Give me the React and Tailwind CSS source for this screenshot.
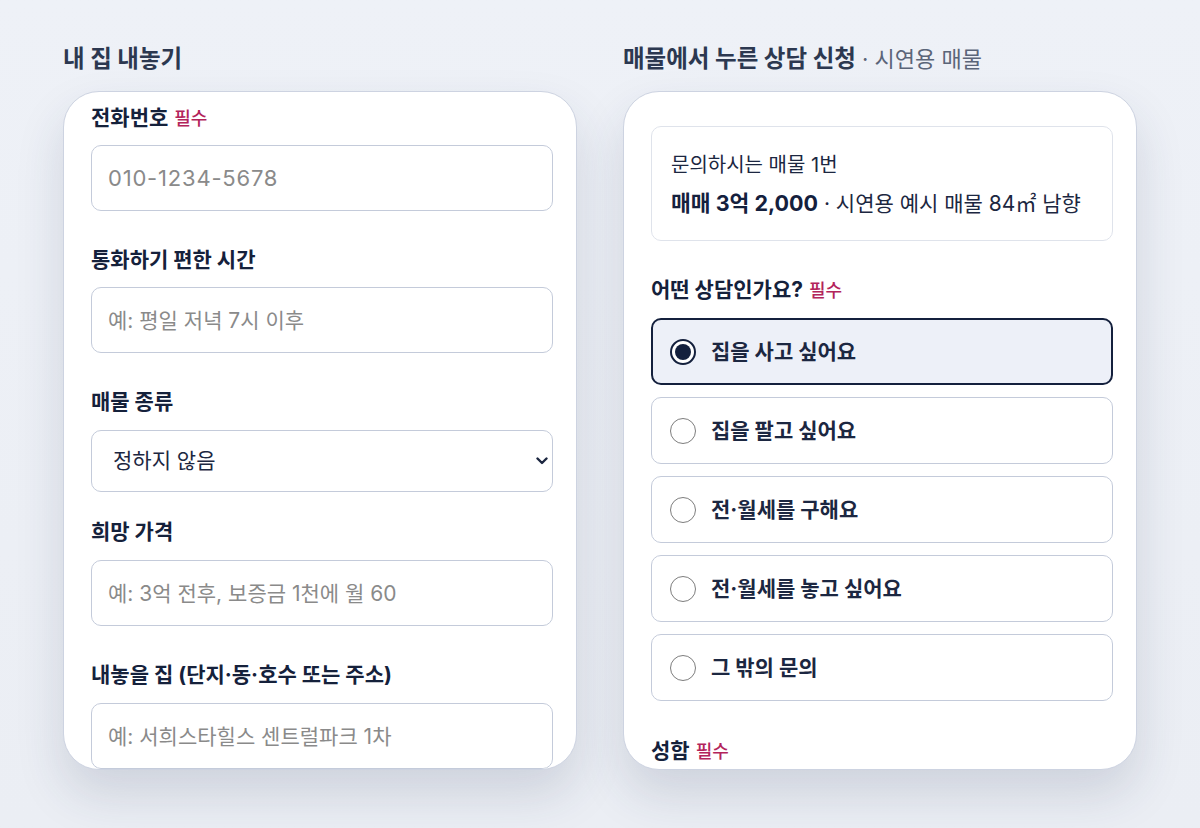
import React from "react";

const font = { fontFamily: "Inter, 'Noto Sans CJK KR', sans-serif" };

function Req() {
  return <span className="ml-[6px] text-[18px] font-medium text-[#b3245b]">필수</span>;
}

function Label({ children, req, className = "" }) {
  return (
    <div className={"h-[26px] leading-[26px] text-[21px] font-bold text-[#15213b] whitespace-nowrap " + className}>
      {children}
      {req && <Req />}
    </div>
  );
}

function Input({ placeholder, className = "" }) {
  return (
    <input
      placeholder={placeholder}
      className={
        "block w-[462px] h-[66px] rounded-[10px] border border-[#c4cbda] bg-white pl-[16px] text-[21px] text-[#1c2741] outline-none placeholder:text-[#8a8a8a] " +
        className
      }
      style={font}
    />
  );
}

function Radio({ checked, label }) {
  return (
    <div
      className={
        "flex h-[67px] items-center rounded-[10px] " +
        (checked ? "border-2 border-[#14203d] bg-[#edf0f8] pl-[17px]" : "border border-[#c4cbda] bg-white pl-[18px]")
      }
    >
      {checked ? (
        <span className="flex h-[26px] w-[26px] items-center justify-center rounded-full border-2 border-[#14203d] bg-white">
          <span className="h-[16px] w-[16px] rounded-full bg-[#14203d]" />
        </span>
      ) : (
        <span className="h-[26px] w-[26px] rounded-full border-[1.5px] border-[#7d7d7d] bg-white" />
      )}
      <span className="ml-[15px] text-[21px] font-bold text-[#1c2741]">{label}</span>
    </div>
  );
}

export default function App() {
  return (
    <div
      className="min-h-[828px] w-[1200px] bg-gradient-to-b from-[#eef1f7] to-[#ebeef4] pl-[63px] pt-[44px]"
      style={font}
    >
      <div className="flex gap-[46px]">
        {/* Left column */}
        <div className="flex flex-col">
          <h2 className="h-[30px] leading-[30px] text-[23.5px] font-bold text-[#2c3850] whitespace-nowrap">내 집 내놓기</h2>
          <div className="mt-[17px] h-[679px] w-[514px] overflow-hidden rounded-[36px] border border-[#cdd3e1] bg-white pl-[27px] pr-[23px] pt-[13px] shadow-[0_24px_48px_rgba(40,55,90,0.15)]">
            <Label req>전화번호</Label>
            <Input placeholder="010-1234-5678" className="mt-[14px] !text-[22px] tracking-[0.8px]" />
            <Label className="mt-[36px]">통화하기 편한 시간</Label>
            <Input placeholder="예: 평일 저녁 7시 이후" className="mt-[14px]" />
            <Label className="mt-[36px]">매물 종류</Label>
            <div className="relative mt-[15px] h-[62px] w-[462px]">
              <select
                className="block h-[62px] w-[462px] appearance-none rounded-[10px] border border-[#c4cbda] bg-white pl-[21px] text-[21px] text-[#1c2741] outline-none"
                style={font}
                defaultValue="none"
              >
                <option value="none">정하지 않음</option>
              </select>
              <svg
                className="pointer-events-none absolute right-[5px] top-[27px]"
                width="12"
                height="8"
                viewBox="0 0 12 8"
              >
                <path d="M1.5 1.5 L6 6 L10.5 1.5" fill="none" stroke="#1c2741" strokeWidth="2.4" strokeLinecap="round" strokeLinejoin="round" />
              </svg>
            </div>
            <Label className="mt-[27px]">희망 가격</Label>
            <Input placeholder="예: 3억 전후, 보증금 1천에 월 60" className="mt-[15px]" />
            <Label className="mt-[36px]">내놓을 집 (단지·동·호수 또는 주소)</Label>
            <Input placeholder="예: 서희스타힐스 센트럴파크 1차" className="mt-[15px]" />
          </div>
        </div>

        {/* Right column */}
        <div className="flex flex-col">
          <h2 className="h-[30px] leading-[30px] text-[23.5px] font-bold text-[#2c3850] whitespace-nowrap">
            매물에서 누른 상담 신청
            <span className="text-[22px] font-normal text-[#5b6579]"> · 시연용 매물</span>
          </h2>
          <div className="mt-[17px] h-[679px] w-[514px] overflow-hidden rounded-[36px] border border-[#cdd3e1] bg-white pl-[27px] pr-[23px] pt-[34px] shadow-[0_24px_48px_rgba(40,55,90,0.15)]">
            <div className="flex h-[115px] w-[462px] flex-col justify-center rounded-[10px] border border-[#dfe3eb] bg-white px-[19px]">
              <div className="h-[26px] leading-[26px] text-[20px] text-[#1c2741] whitespace-nowrap">문의하시는 매물 1번</div>
              <div className="mt-[12px] h-[26px] leading-[26px] text-[21px] text-[#1c2741] whitespace-nowrap">
                <span className="text-[21.5px] font-bold text-[#14203d]">매매 3억 2,000</span> · 시연용 예시 매물 84㎡ 남향
              </div>
            </div>
            <Label req className="mt-[36px]">어떤 상담인가요?</Label>
            <div className="mt-[15px] flex w-[462px] flex-col gap-[12px]">
              <Radio checked label="집을 사고 싶어요" />
              <Radio label="집을 팔고 싶어요" />
              <Radio label="전·월세를 구해요" />
              <Radio label="전·월세를 놓고 싶어요" />
              <Radio label="그 밖의 문의" />
            </div>
            <Label req className="mt-[37px]">성함</Label>
          </div>
        </div>
      </div>
    </div>
  );
}
